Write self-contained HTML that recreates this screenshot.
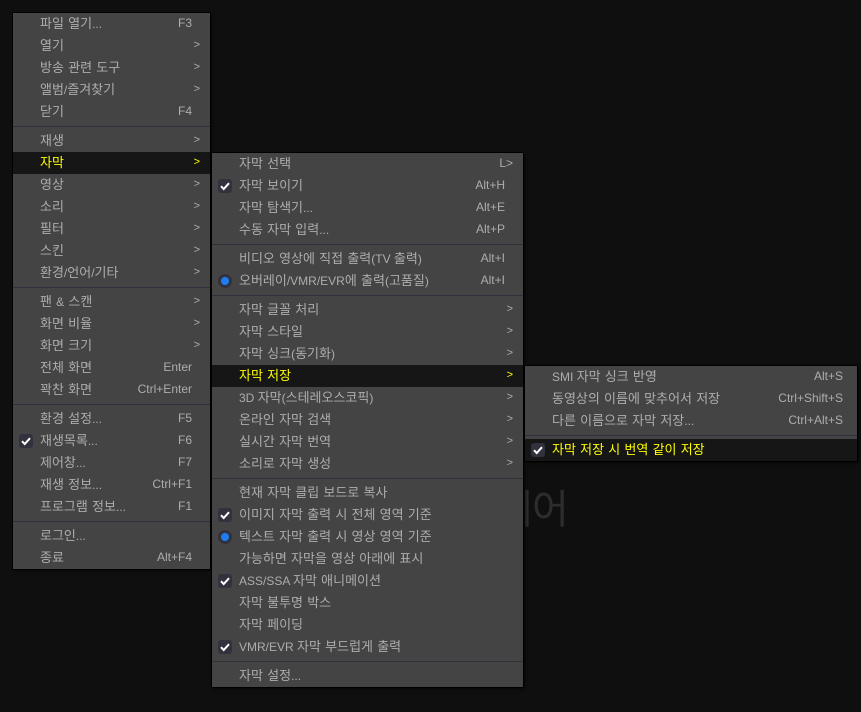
<!DOCTYPE html>
<html lang="ko">
<head>
<meta charset="utf-8">
<style>
html,body{margin:0;padding:0;width:861px;height:712px;overflow:hidden;background:#0f0f0f;}
body{position:relative;font-family:"Liberation Sans","Malgun Gothic","Noto Sans CJK KR","NanumGothic",sans-serif;font-size:12px;color:#adadad;}
.bgt{position:absolute;top:482px;font-size:40px;line-height:56px;color:#2d2d2d;white-space:nowrap;}
.m{position:absolute;background:#444;box-shadow:0 0 0 1px #000,2px 2px 3px rgba(0,0,0,.6);}
.r{position:relative;height:22px;line-height:21px;white-space:nowrap;}
.r b{font-weight:normal;position:absolute;left:27px;top:0;font-size:13px;word-spacing:.6px;}
.r em{font-style:normal;font-size:12px;word-spacing:0;}
.r i{font-style:normal;position:absolute;right:18px;top:0;}
.r u{text-decoration:none;position:absolute;right:10px;top:0;font-size:11px;}
.h{background:#161616;color:#ffff00;}
.s{height:7px;position:relative;}
.s:after{content:"";position:absolute;left:0;right:0;top:3px;height:1px;background:#30303a;}
.c{position:absolute;left:6px;top:4px;width:14px;height:14px;border-radius:3px;background:#32323f;}
.c svg{position:absolute;left:0;top:0;}
.o{position:absolute;left:6px;top:4px;width:14px;height:14px;border-radius:50%;background:#32323f;}
.o:after{content:"";position:absolute;left:3px;top:3px;width:8px;height:8px;border-radius:50%;background:#1e7ef0;}
#m3 .r i{right:14px;}
</style>
</head>
<body>
<div class="bgt" style="left:497px">이</div>
<div class="bgt" style="left:532px">어</div>

<div class="m" id="m1" style="left:13px;top:13px;width:197px;height:556px;">
<div class="r"><b>파일 열기<em>...</em></b><i>F3</i></div>
<div class="r"><b>열기</b><u>&gt;</u></div>
<div class="r"><b>방송 관련 도구</b><u>&gt;</u></div>
<div class="r"><b>앨범<em>/</em>즐겨찾기</b><u>&gt;</u></div>
<div class="r"><b>닫기</b><i>F4</i></div>
<div class="s"></div>
<div class="r"><b>재생</b><u>&gt;</u></div>
<div class="r h"><b>자막</b><u>&gt;</u></div>
<div class="r"><b>영상</b><u>&gt;</u></div>
<div class="r"><b>소리</b><u>&gt;</u></div>
<div class="r"><b>필터</b><u>&gt;</u></div>
<div class="r"><b>스킨</b><u>&gt;</u></div>
<div class="r"><b>환경<em>/</em>언어<em>/</em>기타</b><u>&gt;</u></div>
<div class="s"></div>
<div class="r"><b>팬 <em>&amp;</em> 스캔</b><u>&gt;</u></div>
<div class="r"><b>화면 비율</b><u>&gt;</u></div>
<div class="r"><b>화면 크기</b><u>&gt;</u></div>
<div class="r"><b>전체 화면</b><i>Enter</i></div>
<div class="r"><b>꽉찬 화면</b><i>Ctrl+Enter</i></div>
<div class="s"></div>
<div class="r"><b>환경 설정<em>...</em></b><i>F5</i></div>
<div class="r"><span class="c"><svg width="14" height="14" viewBox="0 0 14 14"><path d="M3 7.2L5.7 10L11 4.2" fill="none" stroke="#fff" stroke-width="2"/></svg></span><b>재생목록<em>...</em></b><i>F6</i></div>
<div class="r"><b>제어창<em>...</em></b><i>F7</i></div>
<div class="r"><b>재생 정보<em>...</em></b><i>Ctrl+F1</i></div>
<div class="r"><b>프로그램 정보<em>...</em></b><i>F1</i></div>
<div class="s"></div>
<div class="r"><b>로그인<em>...</em></b></div>
<div class="r"><b>종료</b><i>Alt+F4</i></div>
</div>

<div class="m" id="m2" style="left:212px;top:153px;width:311px;height:534px;">
<div class="r"><b>자막 선택</b><i style="right:10px">L&gt;</i></div>
<div class="r"><span class="c"><svg width="14" height="14" viewBox="0 0 14 14"><path d="M3 7.2L5.7 10L11 4.2" fill="none" stroke="#fff" stroke-width="2"/></svg></span><b>자막 보이기</b><i>Alt+H</i></div>
<div class="r"><b>자막 탐색기<em>...</em></b><i>Alt+E</i></div>
<div class="r"><b>수동 자막 입력<em>...</em></b><i>Alt+P</i></div>
<div class="s"></div>
<div class="r"><b>비디오 영상에 직접 출력<em>(TV </em>출력<em>)</em></b><i>Alt+I</i></div>
<div class="r"><span class="o"></span><b>오버레이<em>/VMR/EVR</em>에 출력<em>(</em>고품질<em>)</em></b><i>Alt+I</i></div>
<div class="s"></div>
<div class="r"><b>자막 글꼴 처리</b><u>&gt;</u></div>
<div class="r"><b>자막 스타일</b><u>&gt;</u></div>
<div class="r"><b>자막 싱크<em>(</em>동기화<em>)</em></b><u>&gt;</u></div>
<div class="r h"><b>자막 저장</b><u>&gt;</u></div>
<div class="r"><b><em>3D </em>자막<em>(</em>스테레오스코픽<em>)</em></b><u>&gt;</u></div>
<div class="r"><b>온라인 자막 검색</b><u>&gt;</u></div>
<div class="r"><b>실시간 자막 번역</b><u>&gt;</u></div>
<div class="r"><b>소리로 자막 생성</b><u>&gt;</u></div>
<div class="s"></div>
<div class="r"><b>현재 자막 클립 보드로 복사</b></div>
<div class="r"><span class="c"><svg width="14" height="14" viewBox="0 0 14 14"><path d="M3 7.2L5.7 10L11 4.2" fill="none" stroke="#fff" stroke-width="2"/></svg></span><b>이미지 자막 출력 시 전체 영역 기준</b></div>
<div class="r"><span class="o"></span><b>텍스트 자막 출력 시 영상 영역 기준</b></div>
<div class="r"><b>가능하면 자막을 영상 아래에 표시</b></div>
<div class="r"><span class="c"><svg width="14" height="14" viewBox="0 0 14 14"><path d="M3 7.2L5.7 10L11 4.2" fill="none" stroke="#fff" stroke-width="2"/></svg></span><b><em>ASS/SSA </em>자막 애니메이션</b></div>
<div class="r"><b>자막 불투명 박스</b></div>
<div class="r"><b>자막 페이딩</b></div>
<div class="r"><span class="c"><svg width="14" height="14" viewBox="0 0 14 14"><path d="M3 7.2L5.7 10L11 4.2" fill="none" stroke="#fff" stroke-width="2"/></svg></span><b><em>VMR/EVR </em>자막 부드럽게 출력</b></div>
<div class="s"></div>
<div class="r"><b>자막 설정<em>...</em></b></div>
</div>

<div class="m" id="m3" style="left:525px;top:366px;width:332px;height:95px;">
<div class="r"><b><em>SMI </em>자막 싱크 반영</b><i>Alt+S</i></div>
<div class="r"><b>동영상의 이름에 맞추어서 저장</b><i>Ctrl+Shift+S</i></div>
<div class="r"><b>다른 이름으로 자막 저장<em>...</em></b><i>Ctrl+Alt+S</i></div>
<div class="s"></div>
<div class="r h"><span class="c"><svg width="14" height="14" viewBox="0 0 14 14"><path d="M3 7.2L5.7 10L11 4.2" fill="none" stroke="#fff" stroke-width="2"/></svg></span><b>자막 저장 시 번역 같이 저장</b></div>
</div>
</body>
</html>
